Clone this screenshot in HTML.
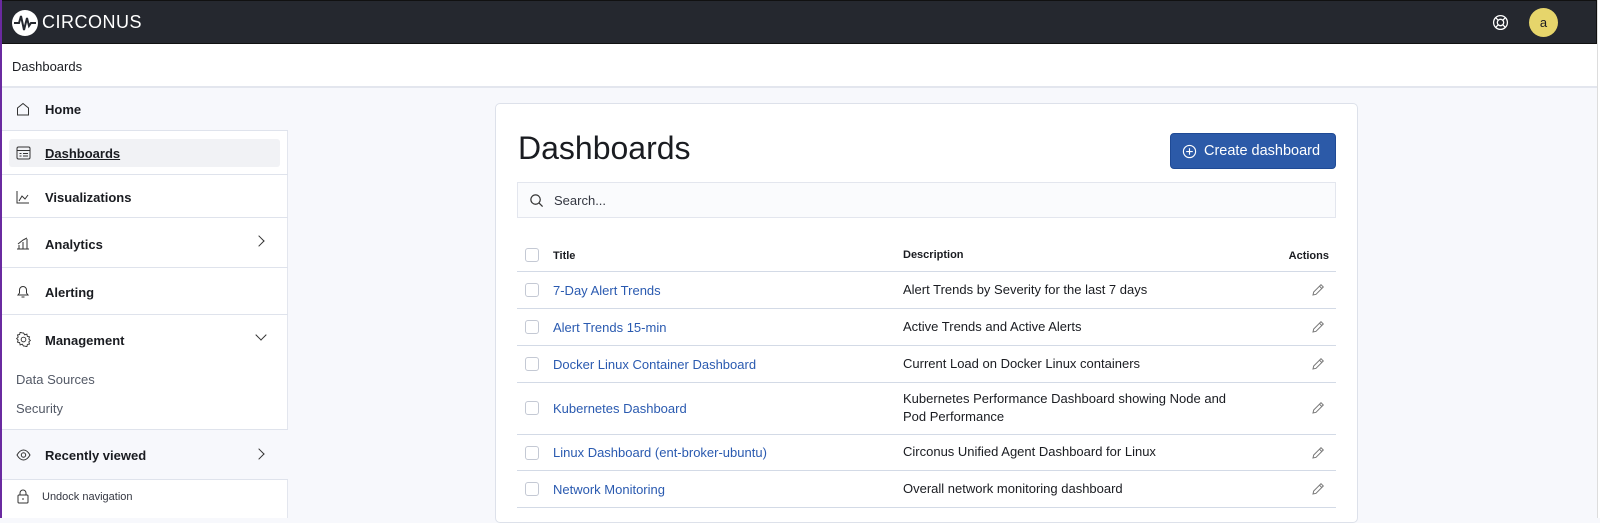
<!DOCTYPE html>
<html><head><meta charset="utf-8"><style>
*{box-sizing:border-box;margin:0;padding:0}
body{width:1600px;height:518px;overflow:hidden;font-family:"Liberation Sans",sans-serif;background:#f7f8fc;position:relative;color:#1a1c21}
.top{position:absolute;left:0;top:0;width:1597px;height:44px;background:#25282f;border:1px solid #111}
.crumb{position:absolute;left:0;top:44px;width:1597px;height:44px;background:#fff;border-bottom:2px solid #e3e6ee;font-size:13px;padding:15px 0 0 12px}
.side{position:absolute;left:0;top:88px;width:288px;height:430px;background:#fff;border-right:1px solid #e3e6ee}
.strip{position:absolute;left:0;top:0;width:2px;height:518px;background:#6a2aa0}
.rgt{position:absolute;left:1597px;top:0;width:3px;height:518px;background:#fff;border-left:1px solid #ddd}
.it{position:absolute;left:0;width:288px;font-size:13px;font-weight:bold;border-bottom:1px solid #dfe3ec}
.it span{position:absolute;left:45px}
.it svg{position:absolute;left:16px}
.sub{position:absolute;left:16px;font-size:13px;color:#535966}
.panel{position:absolute;left:495px;top:103px;width:863px;height:420px;background:#fff;border:1px solid #dde1ea;border-radius:5px}
h1{position:absolute;left:22px;top:26px;font-size:32px;font-weight:normal}
.btn{position:absolute;left:674px;top:29px;width:166px;height:36px;background:#2c5aa8;border-radius:4px;color:#fff;font-size:14.5px;padding:9px 0 0 33px;border:1px solid #1f4a95}
.search{position:absolute;left:21px;top:78px;width:819px;height:36px;background:#fafbfd;border:1px solid #e3e6ee;font-size:13px;color:#343741;padding:10px 0 0 36px}
.row{position:absolute;left:21px;width:819px;border-bottom:1px solid #d3dae6;font-size:13px}
.cb{position:absolute;left:8px;width:14px;height:14px;border:1px solid #c4c9d4;border-radius:3px;background:#fff}
.t{position:absolute;left:36px;color:#2a5ab0}
.d{position:absolute;left:386px;line-height:18px}
.pen{position:absolute;left:794px}
</style></head><body>
<div class="top">
<svg style="position:absolute;left:10px;top:8px" width="28" height="28" viewBox="0 0 28 28"><circle cx="14" cy="14" r="13" fill="#fff"/><path d="M3 14h5l2-7 3 14 3-12 2 8 2-3h5" stroke="#25282f" stroke-width="2" fill="none"/></svg>
<div style="position:absolute;left:41px;top:11px;color:#fff;font-size:18px;letter-spacing:0.5px">CIRCONUS</div>
<svg style="position:absolute;left:1491px;top:13px" width="17" height="17" viewBox="0 0 16 16" fill="none" stroke="#fff" stroke-width="1.2"><circle cx="8" cy="8" r="6.5"/><circle cx="8" cy="8" r="3"/><path d="M3.5 3.5l2.4 2.4M12.5 3.5l-2.4 2.4M3.5 12.5l2.4-2.4M12.5 12.5l-2.4-2.4"/></svg>
<div style="position:absolute;left:1528px;top:7px;width:29px;height:29px;border-radius:50%;background:#e6d56b;font-size:13px;text-align:center;line-height:29px">a</div>
</div>
<div class="crumb">Dashboards</div>
<div class="side">
<div class="it" style="top:0;height:43px;background:#f7f8fc"><svg style="top:14px" width="14" height="14" viewBox="0 0 14 14" fill="none" stroke="#333"><path d="M1.5 13V6L7 1.5 12.5 6v7z"/></svg><span style="top:14px">Home</span></div>
<div class="it" style="top:43px;height:44px"><div style="position:absolute;left:9px;top:8px;width:271px;height:28px;background:#f1f2f5;border-radius:3px"></div><svg style="top:15px" width="15" height="14" viewBox="0 0 15 14" fill="none" stroke="#333"><rect x="1" y="1" width="13" height="12" rx="1.5"/><path d="M1 4.5h13M3.5 7.5h2M7 7.5h5M3.5 10h2M7 10h5"/></svg><span style="top:15px;text-decoration:underline">Dashboards</span></div>
<div class="it" style="top:87px;height:43px"><svg style="top:15px" width="14" height="14" viewBox="0 0 14 14" fill="none" stroke="#333"><path d="M1 1v12h12M3 11l3-5 3 3 3-4"/></svg><span style="top:15px">Visualizations</span></div>
<div class="it" style="top:130px;height:50px"><svg style="top:18px" width="14" height="14" viewBox="0 0 14 14" fill="none" stroke="#333"><path d="M1 13h12M3 13V9M7 13V6M11 13V3M2 8l5-4 4-2"/></svg><span style="top:19px">Analytics</span><div style="position:absolute;left:255px;top:19px;width:8px;height:8px;border-right:1.3px solid #333;border-top:1.3px solid #333;transform:rotate(45deg)"></div></div>
<div class="it" style="top:180px;height:47px"><svg style="top:16px" width="14" height="15" viewBox="0 0 14 15" fill="none" stroke="#333"><path d="M2 11h10l-1.5-2V6a3.5 3.5 0 00-7 0v3zM5.5 13h3"/></svg><span style="top:17px">Alerting</span></div>
<div style="position:absolute;left:0;top:227px;width:288px;height:115px;border-bottom:1px solid #dfe3ec">
<svg style="position:absolute;left:16px;top:17px" width="15" height="15" viewBox="0 0 16 16" fill="none" stroke="#333"><circle cx="8" cy="8" r="2.5"/><path d="M8 1l1.3 2 2.3-.7.5 2.3 2.3.6-.7 2.3 1.6 1.5-1.6 1.5.7 2.3-2.3.6-.5 2.3-2.3-.7L8 15l-1.3-2-2.3.7-.5-2.3L1.6 10.8l.7-2.3L.7 7l1.6-1.5-.7-2.3 2.3-.6.5-2.3 2.3.7z"/></svg>
<span style="position:absolute;left:45px;top:18px;font-size:13px;font-weight:bold">Management</span>
<div style="position:absolute;left:257px;top:16px;width:8px;height:8px;border-right:1.3px solid #333;border-bottom:1.3px solid #333;transform:rotate(45deg)"></div>
<div class="sub" style="top:57px">Data Sources</div><div class="sub" style="top:86px">Security</div></div>
<div class="it" style="top:342px;height:50px;background:#f7f8fc"><svg style="top:19px" width="15" height="12" viewBox="0 0 15 12" fill="none" stroke="#333"><path d="M1 6c2-3.5 4-5 6.5-5S12 2.5 14 6c-2 3.5-4 5-6.5 5S3 9.5 1 6z"/><circle cx="7.5" cy="6" r="2.2"/></svg><span style="top:18px">Recently viewed</span><div style="position:absolute;left:255px;top:20px;width:8px;height:8px;border-right:1.3px solid #333;border-top:1.3px solid #333;transform:rotate(45deg)"></div></div>
<svg style="position:absolute;left:17px;top:401px" width="12" height="15" viewBox="0 0 12 15" fill="none" stroke="#333"><rect x="1" y="6" width="10" height="8" rx="1"/><path d="M3 6V4a3 3 0 016 0v2M6 9v2"/></svg>
<div style="position:absolute;left:42px;top:403px;font-size:11px;color:#343741">Undock navigation</div>
</div>
<div class="strip"></div><div class="rgt"></div>
<div class="panel">
<h1>Dashboards</h1>
<div class="btn"><svg style="position:absolute;left:11px;top:10px" width="15" height="15" viewBox="0 0 16 16" fill="none" stroke="#fff" stroke-width="1.2"><circle cx="8" cy="8" r="6.5"/><path d="M8 4.5v7M4.5 8h7"/></svg>Create dashboard</div>
<div class="search"><svg style="position:absolute;left:11px;top:10px" width="15" height="15" viewBox="0 0 16 16" fill="none" stroke="#333" stroke-width="1.3"><circle cx="7" cy="7" r="5"/><path d="M10.5 10.5l4 4"/></svg>Search...</div>
<div class="row" style="top:138px;height:30px;font-size:11px;font-weight:bold"><div class="cb" style="top:6px"></div><div class="t" style="top:8px;color:#1a1c21">Title</div><div class="d" style="top:4px">Description</div><div style="position:absolute;right:7px;top:8px">Actions</div></div>
<div class="row" style="top:168px;height:37px"><div class="cb" style="top:11px"></div><div class="t" style="top:11px">7-Day Alert Trends</div><div class="d" style="top:9px">Alert Trends by Severity for the last 7 days</div><svg class="pen" style="top:11px" width="14" height="14" viewBox="0 0 14 14" fill="none" stroke="#777"><path d="M2 12l.7-3L10 1.7l2.3 2.3L5 11.3zM8.5 3.2l2.3 2.3"/></svg></div>
<div class="row" style="top:205px;height:37px"><div class="cb" style="top:11px"></div><div class="t" style="top:11px">Alert Trends 15-min</div><div class="d" style="top:9px">Active Trends and Active Alerts</div><svg class="pen" style="top:11px" width="14" height="14" viewBox="0 0 14 14" fill="none" stroke="#777"><path d="M2 12l.7-3L10 1.7l2.3 2.3L5 11.3zM8.5 3.2l2.3 2.3"/></svg></div>
<div class="row" style="top:242px;height:37px"><div class="cb" style="top:11px"></div><div class="t" style="top:11px">Docker Linux Container Dashboard</div><div class="d" style="top:9px">Current Load on Docker Linux containers</div><svg class="pen" style="top:11px" width="14" height="14" viewBox="0 0 14 14" fill="none" stroke="#777"><path d="M2 12l.7-3L10 1.7l2.3 2.3L5 11.3zM8.5 3.2l2.3 2.3"/></svg></div>
<div class="row" style="top:279px;height:52px"><div class="cb" style="top:18px"></div><div class="t" style="top:18px">Kubernetes Dashboard</div><div class="d" style="top:7px">Kubernetes Performance Dashboard showing Node and<br>Pod Performance</div><svg class="pen" style="top:18px" width="14" height="14" viewBox="0 0 14 14" fill="none" stroke="#777"><path d="M2 12l.7-3L10 1.7l2.3 2.3L5 11.3zM8.5 3.2l2.3 2.3"/></svg></div>
<div class="row" style="top:331px;height:36px"><div class="cb" style="top:11px"></div><div class="t" style="top:10px">Linux Dashboard (ent-broker-ubuntu)</div><div class="d" style="top:8px">Circonus Unified Agent Dashboard for Linux</div><svg class="pen" style="top:11px" width="14" height="14" viewBox="0 0 14 14" fill="none" stroke="#777"><path d="M2 12l.7-3L10 1.7l2.3 2.3L5 11.3zM8.5 3.2l2.3 2.3"/></svg></div>
<div class="row" style="top:367px;height:37px"><div class="cb" style="top:11px"></div><div class="t" style="top:11px">Network Monitoring</div><div class="d" style="top:9px">Overall network monitoring dashboard</div><svg class="pen" style="top:11px" width="14" height="14" viewBox="0 0 14 14" fill="none" stroke="#777"><path d="M2 12l.7-3L10 1.7l2.3 2.3L5 11.3zM8.5 3.2l2.3 2.3"/></svg></div>
</div>
</body></html>
